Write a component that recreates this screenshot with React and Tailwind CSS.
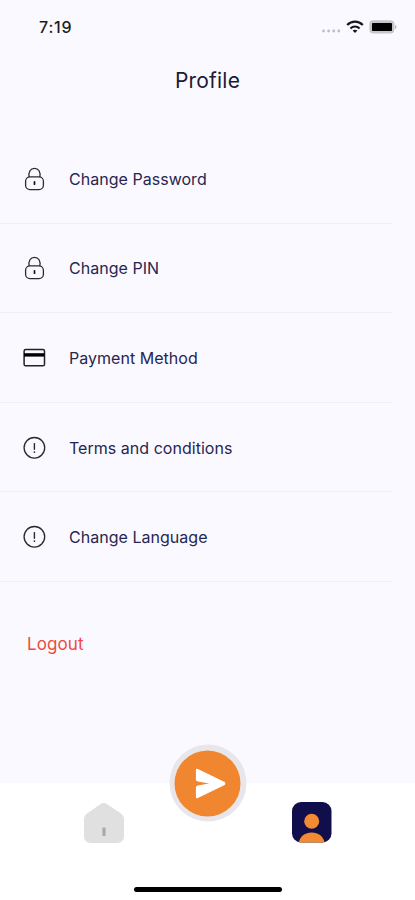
import React from 'react';

const LockIcon = () => (
  <svg width="24" height="24" viewBox="0 0 24 24" fill="none" stroke="#2a2a2e" strokeWidth="1.3">
    <path d="M7.2 10.2C6.2 4.8 8.4 1.4 12.5 1.4s6.3 3.4 5.3 8.8" />
    <rect x="3.6" y="9.9" width="17.8" height="12.7" rx="4.4" />
    <path d="M12.5 14.8v2.4" strokeWidth="1.7" strokeLinecap="round" stroke="#111" />
  </svg>
);

const CardIcon = () => (
  <svg width="24" height="24" viewBox="0 0 24 24" fill="none">
    <rect x="2.1" y="3.6" width="20.4" height="16.2" rx="1.6" stroke="#222226" strokeWidth="1.5" />
    <path d="M2 8.9h20.5" stroke="#000" strokeWidth="3.4" />
  </svg>
);

const AlertIcon = () => (
  <svg width="24" height="24" viewBox="0 0 24 24" fill="none" stroke="#2a2a2e">
    <circle cx="12.4" cy="11.8" r="10.3" strokeWidth="1.3" />
    <path d="M12.4 7.6v5.6" strokeWidth="1.4" strokeLinecap="round" />
    <circle cx="12.4" cy="16.1" r="0.9" fill="#2a2a2e" stroke="none" />
  </svg>
);

const menuItems = [
  { label: 'Change Password', icon: LockIcon },
  { label: 'Change PIN', icon: LockIcon },
  { label: 'Payment Method', icon: CardIcon },
  { label: 'Terms and conditions', icon: AlertIcon },
  { label: 'Change Language', icon: AlertIcon },
];

const StatusBar = () => (
  <div className="flex h-[54px] items-center justify-between pl-[39px] pr-[18px]">
    <span className="text-[16px] font-medium tracking-[0.8px] text-[#1c1c20]">7:19</span>
    <div className="flex items-center">
      <svg width="20" height="14" viewBox="0 0 20 14" fill="#bdbcc5">
        <circle cx="2.5" cy="11" r="1.4" />
        <circle cx="7.6" cy="11" r="1.4" />
        <circle cx="12.7" cy="11" r="1.4" />
        <circle cx="17.8" cy="11" r="1.4" />
      </svg>
      <svg className="ml-[5px]" width="18" height="14" viewBox="0 0 18 14" fill="none" stroke="#17171a">
        <path d="M1.2 5C5.6 0.6 12.4 0.6 16.8 5" strokeWidth="2.3" />
        <path d="M4.4 8.4C7 5.9 11 5.9 13.6 8.4" strokeWidth="2.1" />
        <path d="M9 13L6.6 10.6C8 9.4 10 9.4 11.4 10.6Z" fill="#17171a" stroke="none" />
      </svg>
      <svg className="ml-[5px]" width="28" height="14" viewBox="0 0 28 14">
        <rect x="0.4" y="0.2" width="25" height="13.4" rx="4" fill="#c6c5c9" />
        <rect x="3" y="3" width="20" height="8" rx="0.8" fill="#000" />
        <path d="M26.2 5v4c1.6-.6 1.6-3.4 0-4z" fill="#a3a3a8" />
      </svg>
    </div>
  </div>
);

const HomeIcon = () => (
  <svg width="42" height="42" viewBox="0 0 42 42">
    <path
      d="M17 2.4Q20.8 -0.2 24.6 2.4L38 11.4Q41 13.6 41 17.5V34Q41 41 34 41H8Q1 41 1 34V17.500Q1 13.6 4 11.4Z"
      fill="#e0e0e0"
    />
    <rect x="19.4" y="25.5" width="3.2" height="8.4" rx="0.6" fill="#a9a9a9" />
  </svg>
);

const ProfileIcon = () => (
  <svg width="40" height="41" viewBox="0 0 40 41">
    <rect width="39.5" height="40.5" rx="9" fill="#110e4c" />
    <circle cx="19.7" cy="19.3" r="7.5" fill="#f18a32" />
    <path d="M6.7 40.500C8.2 34 13.2 30.500 19.7 30.500s11.5 3.5 13 10z" fill="#f18a32" />
  </svg>
);

const BottomNav = () => (
  <div className="relative h-[117px] bg-white">
    <div className="flex justify-between pl-[83px] pr-[83px] pt-[19px]">
      <HomeIcon />
      <ProfileIcon />
    </div>
    <button className="absolute left-1/2 top-0 flex h-[77px] w-[77px] -translate-x-1/2 -translate-y-1/2 items-center justify-center rounded-full bg-[#e7e7eb]">
      <span className="flex h-[66px] w-[66px] items-center justify-center rounded-full bg-[#f0862f]">
        <svg width="36" height="32" viewBox="0 0 36 32" fill="#fff">
          <path d="M6.4 2.7Q6.4 0.6 8.4 1.5L35.2 14.6Q37 16 35.2 17.4L8.4 30.6Q6.4 31.4 6.4 29.3V20Q6.500 18.400 8.200 18L19.6 16L8.2 14Q6.5 13.6 6.4 12Z" />
        </svg>
      </span>
    </button>
    <div className="mx-auto mt-[43px] h-[5px] w-[148px] rounded-full bg-black" />
  </div>
);

const App = () => {
  return (
    <div className="flex h-[900px] w-[415px] flex-col overflow-hidden bg-[#faf9ff] font-['Inter',sans-serif]">
      <StatusBar />
      <h1 className="pt-px text-center text-[21px] leading-[52px] tracking-[0.2px] text-[#1b1a33]">Profile</h1>

      <div className="mt-[27px] w-[392px]">
        {menuItems.map(({ label, icon: Icon }) => (
          <div key={label} className="flex h-[89.6px] items-center border-b border-[#f0eff5] pl-[22px] pt-px">
            <Icon />
            <span className="ml-[23px] text-[16px] tracking-[0.03px] text-[#272650]">{label}</span>
          </div>
        ))}
      </div>

      <button className="mt-[50px] self-start pl-[27px] text-[17px] leading-[24px] tracking-[0.1px] text-[#ee4a42]">
        Logout
      </button>

      <div className="mt-auto">
        <BottomNav />
      </div>
    </div>
  );
};

export default App;
